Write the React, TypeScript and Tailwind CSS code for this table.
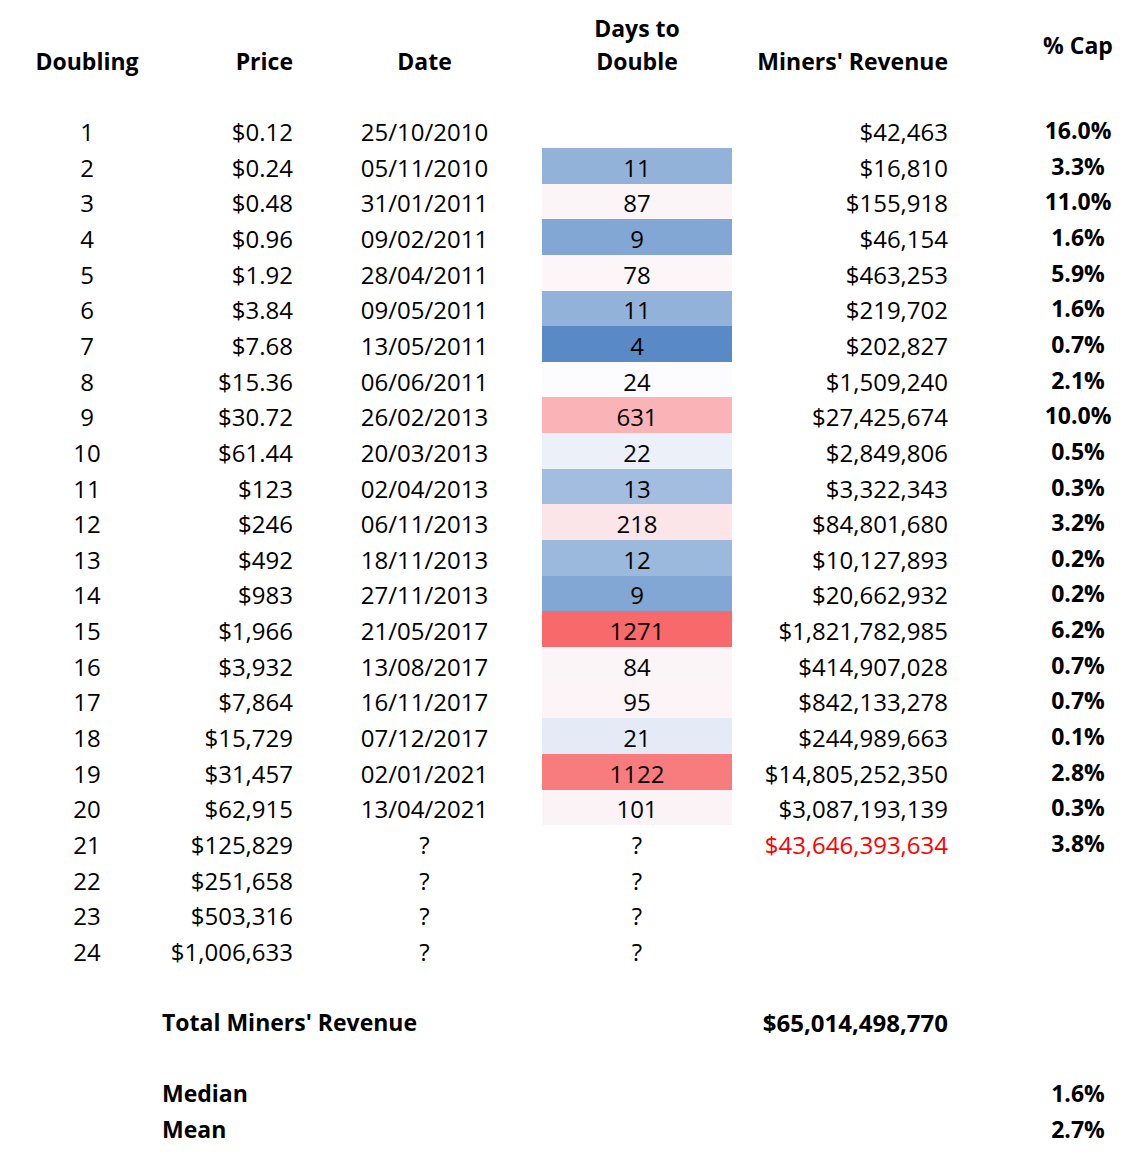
type Row = {
  n: number;
  price: string;
  date: string;
  days: string;
  bg: string;
  revenue: string;
  cap: string;
  red?: boolean;
};

const rows: Row[] = [
  { n: 1, price: '$0.12', date: '25/10/2010', days: '', bg: '', revenue: '$42,463', cap: '16.0%' },
  { n: 2, price: '$0.24', date: '05/11/2010', days: '11', bg: 'bg-[#93B2DA]', revenue: '$16,810', cap: '3.3%' },
  { n: 3, price: '$0.48', date: '31/01/2011', days: '87', bg: 'bg-[#FCF5F8]', revenue: '$155,918', cap: '11.0%' },
  { n: 4, price: '$0.96', date: '09/02/2011', days: '9', bg: 'bg-[#83A7D4]', revenue: '$46,154', cap: '1.6%' },
  { n: 5, price: '$1.92', date: '28/04/2011', days: '78', bg: 'bg-[#FCF6F9]', revenue: '$463,253', cap: '5.9%' },
  { n: 6, price: '$3.84', date: '09/05/2011', days: '11', bg: 'bg-[#93B2DA]', revenue: '$219,702', cap: '1.6%' },
  { n: 7, price: '$7.68', date: '13/05/2011', days: '4', bg: 'bg-[#5A8AC6]', revenue: '$202,827', cap: '0.7%' },
  { n: 8, price: '$15.36', date: '06/06/2011', days: '24', bg: 'bg-[#FCFCFF]', revenue: '$1,509,240', cap: '2.1%' },
  { n: 9, price: '$30.72', date: '26/02/2013', days: '631', bg: 'bg-[#FAB4B7]', revenue: '$27,425,674', cap: '10.0%' },
  { n: 10, price: '$61.44', date: '20/03/2013', days: '22', bg: 'bg-[#ECF1F9]', revenue: '$2,849,806', cap: '0.5%' },
  { n: 11, price: '$123', date: '02/04/2013', days: '13', bg: 'bg-[#A3BDE0]', revenue: '$3,322,343', cap: '0.3%' },
  { n: 12, price: '$246', date: '06/11/2013', days: '218', bg: 'bg-[#FBE5E8]', revenue: '$84,801,680', cap: '3.2%' },
  { n: 13, price: '$492', date: '18/11/2013', days: '12', bg: 'bg-[#9BB8DD]', revenue: '$10,127,893', cap: '0.2%' },
  { n: 14, price: '$983', date: '27/11/2013', days: '9', bg: 'bg-[#83A7D4]', revenue: '$20,662,932', cap: '0.2%' },
  { n: 15, price: '$1,966', date: '21/05/2017', days: '1271', bg: 'bg-[#F8696B]', revenue: '$1,821,782,985', cap: '6.2%' },
  { n: 16, price: '$3,932', date: '13/08/2017', days: '84', bg: 'bg-[#FCF5F8]', revenue: '$414,907,028', cap: '0.7%' },
  { n: 17, price: '$7,864', date: '16/11/2017', days: '95', bg: 'bg-[#FCF4F7]', revenue: '$842,133,278', cap: '0.7%' },
  { n: 18, price: '$15,729', date: '07/12/2017', days: '21', bg: 'bg-[#E4EBF6]', revenue: '$244,989,663', cap: '0.1%' },
  { n: 19, price: '$31,457', date: '02/01/2021', days: '1122', bg: 'bg-[#F87B7D]', revenue: '$14,805,252,350', cap: '2.8%' },
  { n: 20, price: '$62,915', date: '13/04/2021', days: '101', bg: 'bg-[#FCF3F6]', revenue: '$3,087,193,139', cap: '0.3%' },
  { n: 21, price: '$125,829', date: '?', days: '?', bg: '', revenue: '$43,646,393,634', cap: '3.8%', red: true },
  { n: 22, price: '$251,658', date: '?', days: '?', bg: '', revenue: '', cap: '' },
  { n: 23, price: '$503,316', date: '?', days: '?', bg: '', revenue: '', cap: '' },
  { n: 24, price: '$1,006,633', date: '?', days: '?', bg: '', revenue: '', cap: '' },
];

const grid = 'grid grid-cols-[174px_126px_242px_190px_276px_140px]';
const rowH = 'h-[35.65px]';

function DataRow({ row }: { row: Row }) {
  return (
    <div className={`${grid} ${rowH} items-stretch`}>
      <div className="flex items-center justify-center pt-[4px]">{row.n}</div>
      <div className="flex items-center justify-end pr-[7px] pt-[4px]">{row.price}</div>
      <div className="flex items-center justify-center pl-[7px] pt-[4px]">{row.date}</div>
      <div className={`flex items-center justify-center pt-[4px] ${row.bg}`}>{row.days}</div>
      <div
        className={`flex items-center justify-end pr-[60px] pt-[4px] ${
          row.red ? 'text-[#FF0000]' : ''
        }`}
      >
        {row.revenue}
      </div>
      <div className="flex items-center justify-center pt-[1px] text-[23px] font-bold">{row.cap}</div>
    </div>
  );
}

export default function App() {
  return (
    <div
      className="h-[1164px] w-[1148px] bg-white text-[24px] leading-none text-black"
      style={{ fontFamily: '"Open Sans", "Liberation Sans", sans-serif' }}
    >
      <div className={`${grid} h-[78px] text-[23px] font-bold leading-[33px]`}>
        <div className="flex items-end justify-center">Doubling</div>
        <div className="flex items-end justify-end pr-[7px]">Price</div>
        <div className="flex items-end justify-center pl-[7px]">Date</div>
        <div className="flex flex-col items-center justify-end">
          <span>Days to</span>
          <span>Double</span>
        </div>
        <div className="flex items-end justify-end pr-[60px]">Miners' Revenue</div>
        <div className="flex items-end justify-center pb-[16px]">% Cap</div>
      </div>
      <div className="h-[34.35px]" />

      {rows.map((row) => (
        <DataRow key={row.n} row={row} />
      ))}

      <div className={rowH} />
      <div className={`${grid} ${rowH} text-[23px] font-bold`}>
        <div className="col-span-4 flex items-center pl-[162px] pt-[3px]">Total Miners' Revenue</div>
        <div className="flex items-center justify-end pr-[60px] pt-[3px] text-[24px]">$65,014,498,770</div>
        <div />
      </div>
      <div className={rowH} />
      <div className={`${grid} ${rowH} text-[23px] font-bold`}>
        <div className="col-span-5 flex items-center pl-[162px] pt-[3px]">Median</div>
        <div className="flex items-center justify-center pt-[3px]">1.6%</div>
      </div>
      <div className={`${grid} ${rowH} text-[23px] font-bold`}>
        <div className="col-span-5 flex items-center pl-[162px] pt-[3px]">Mean</div>
        <div className="flex items-center justify-center pt-[3px]">2.7%</div>
      </div>
    </div>
  );
}
